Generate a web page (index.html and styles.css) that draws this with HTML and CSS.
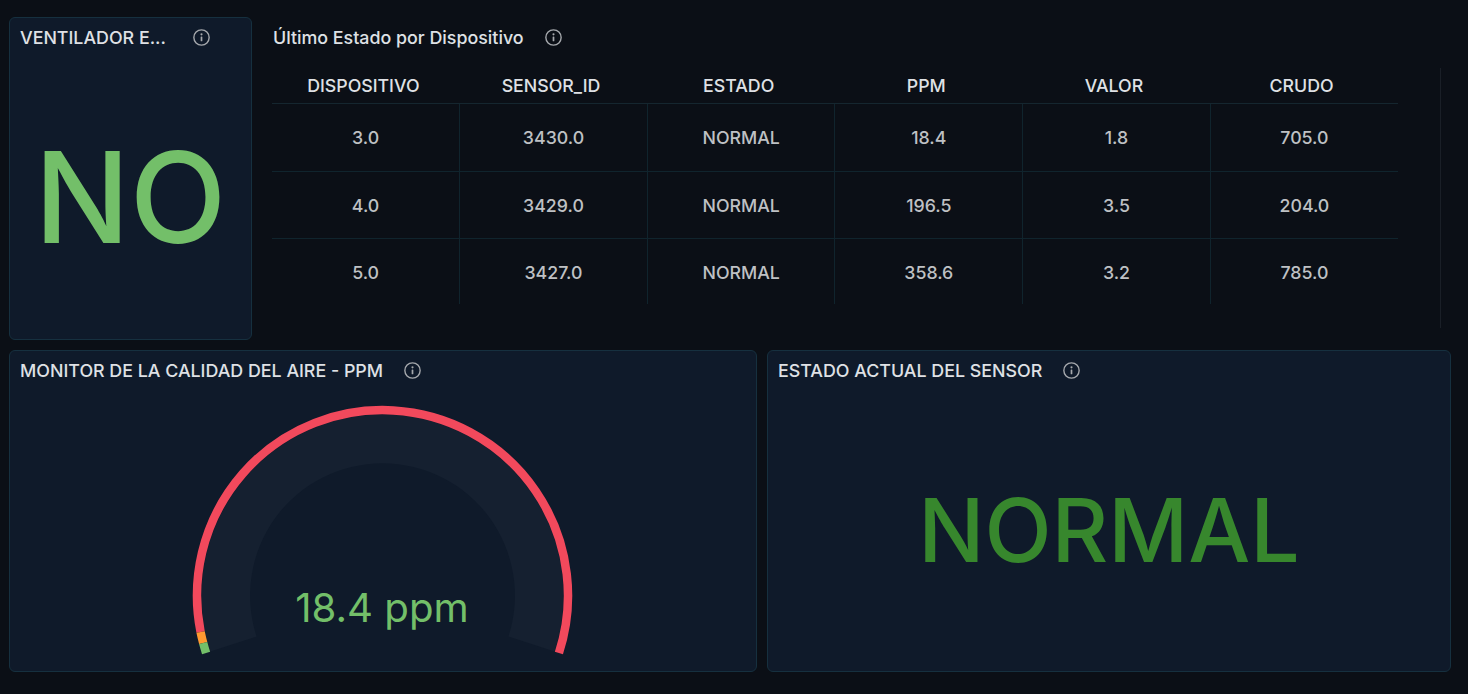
FILE: index.html
```html
<!DOCTYPE html>
<html lang="es">
<head>
<meta charset="utf-8">
<title>Dashboard</title>
<link rel="stylesheet" href="styles.css">
</head>
<body>
<svg class="defs" width="0" height="0" aria-hidden="true">
  <symbol id="info" viewBox="0 0 16 16">
    <circle cx="8" cy="8" r="7.2" fill="none" stroke="currentColor" stroke-width="1.3"/>
    <circle cx="8" cy="5" r="1" fill="currentColor"/>
    <rect x="7.2" y="7" width="1.6" height="4.6" rx="0.6" fill="currentColor"/>
  </symbol>
</svg>
<main class="dashboard">
  <section class="row row-top">
    <article class="panel panel-fan">
      <header class="panel-head head-fan">
        <h2 class="panel-title title-fan">VENTILADOR E...</h2>
        <svg class="info"><use href="#info"/></svg>
      </header>
      <div class="big big-no">NO</div>
    </article>
    <article class="plain">
      <header class="panel-head head-plain">
        <h2 class="panel-title">Último Estado por Dispositivo</h2>
        <svg class="info"><use href="#info"/></svg>
      </header>
      <div class="table-wrap">
        <table class="data">
          <thead>
            <tr><th>DISPOSITIVO</th><th>SENSOR_ID</th><th>ESTADO</th><th>PPM</th><th>VALOR</th><th>CRUDO</th></tr>
          </thead>
          <tbody>
            <tr><td>3.0</td><td>3430.0</td><td>NORMAL</td><td>18.4</td><td>1.8</td><td>705.0</td></tr>
            <tr><td>4.0</td><td>3429.0</td><td>NORMAL</td><td>196.5</td><td>3.5</td><td>204.0</td></tr>
            <tr><td>5.0</td><td>3427.0</td><td>NORMAL</td><td>358.6</td><td>3.2</td><td>785.0</td></tr>
          </tbody>
        </table>
        <div class="scroll-line"></div>
      </div>
    </article>
  </section>
  <section class="row row-bottom">
    <article class="panel panel-gauge">
      <header class="panel-head">
        <h2 class="panel-title">MONITOR DE LA CALIDAD DEL AIRE - PPM</h2>
        <svg class="info"><use href="#info"/></svg>
      </header>
      <svg class="gauge" viewBox="10 351 746 320" width="746" height="320">
        <path class="gauge-track" d="M210.4 651.6 A181 181 0 1 1 554.6 651.6 L508.4 636.6 A132.4 132.4 0 1 0 256.6 636.6 Z"/>
        <path class="arc arc-red" d="M200.6 632 A185.5 185.5 0 1 1 558.9 653"/>
        <path class="arc arc-orange" d="M203.2 643 A185.5 185.5 0 0 1 200.6 632"/>
        <path class="arc arc-green" d="M206.1 653 A185.5 185.5 0 0 1 203.2 643"/>
        <text class="gauge-value" x="382" y="622" text-anchor="middle">18.4 ppm</text>
      </svg>
    </article>
    <article class="panel panel-state">
      <header class="panel-head">
        <h2 class="panel-title">ESTADO ACTUAL DEL SENSOR</h2>
        <svg class="info"><use href="#info"/></svg>
      </header>
      <div class="big big-normal">NORMAL</div>
    </article>
  </section>
</main>
</body>
</html>
```
FILE: styles.css
```css
* { box-sizing: border-box; }
html, body { margin: 0; height: 100%; }
body {
  background: #0b0f16;
  font-family: Inter, "Liberation Sans", sans-serif;
  color: #e0e2e6;
  overflow: hidden;
}
.defs { position: absolute; }
.dashboard {
  display: flex;
  flex-direction: column;
  gap: 10px;
  padding: 17px 17px 22px 9px;
  height: 694px;
}
.row { display: flex; gap: 10px; }
.row-top { height: 323px; }
.row-bottom { height: 322px; }
.panel {
  display: flex;
  flex-direction: column;
  background: #0f1a2a;
  border: 1px solid #16303f;
  border-radius: 6px;
  min-width: 0;
}
.panel-fan { width: 243px; }
.panel-gauge { width: 748px; position: relative; }
.panel-state { width: 684px; }
.plain { flex: 1; min-width: 0; }
.panel-head {
  display: flex;
  align-items: center;
  gap: 21px;
  height: 39px;
  padding: 0 10px;
  flex: none;
}
.head-plain { height: 41px; padding-left: 11px; gap: 21px; }
.head-fan { gap: 0; justify-content: space-between; padding-right: 41px; }
.panel-title {
  margin: 0;
  font-size: 17.84px;
  font-weight: 500;
  color: #dfe1e5;
  white-space: nowrap;
}
.info { width: 17px; height: 17px; color: #a6a9ad; flex: none; }
.big {
  flex: 1;
  display: flex;
  align-items: center;
  justify-content: center;
  font-weight: 500;
  line-height: 1;
}
.big-no { color: #73bf69; font-size: 126px; padding-bottom: 2px; }
.big-normal { color: #37872d; font-size: 87.6px; padding-top: 1px; }
.table-wrap {
  display: flex;
  gap: 42px;
  margin-top: 10px;
  padding-left: 10px;
  align-items: flex-start;
}
.data {
  width: 1126px;
  table-layout: fixed;
  border-collapse: collapse;
  flex: none;
}
.data th {
  height: 35px;
  padding: 0 5px 0 0;
  font-size: 17.76px;
  font-weight: 500;
  color: #dfe1e5;
  text-align: center;
  border-bottom: 1px solid #15262f;
}
.data td {
  height: 67px;
  padding: 1px 0 0 0;
  font-size: 17.76px;
  font-weight: 500;
  color: #bfc1c4;
  text-align: center;
  border-left: 1px solid #10242d;
  border-bottom: 1px solid #10242d;
}
.data tr:first-child td { height: 68px; padding-top: 0; }
.data tr:last-child td { height: 66px; padding-top: 2px; border-bottom: 0; }
.data td:first-child { border-left: 0; }
.scroll-line { width: 1px; height: 260px; background: #1a1f27; flex: none; }
.gauge { position: absolute; left: 0; top: 0; }
.gauge-track { fill: #152030; }
.arc { fill: none; stroke-width: 8.5; }
.arc-red { stroke: #f2495c; }
.arc-orange { stroke: #ff9830; }
.arc-green { stroke: #73bf69; }
.gauge-value {
  fill: #73bf69;
  font-family: Inter, "Liberation Sans", sans-serif;
  font-size: 40.2px;
}
```
